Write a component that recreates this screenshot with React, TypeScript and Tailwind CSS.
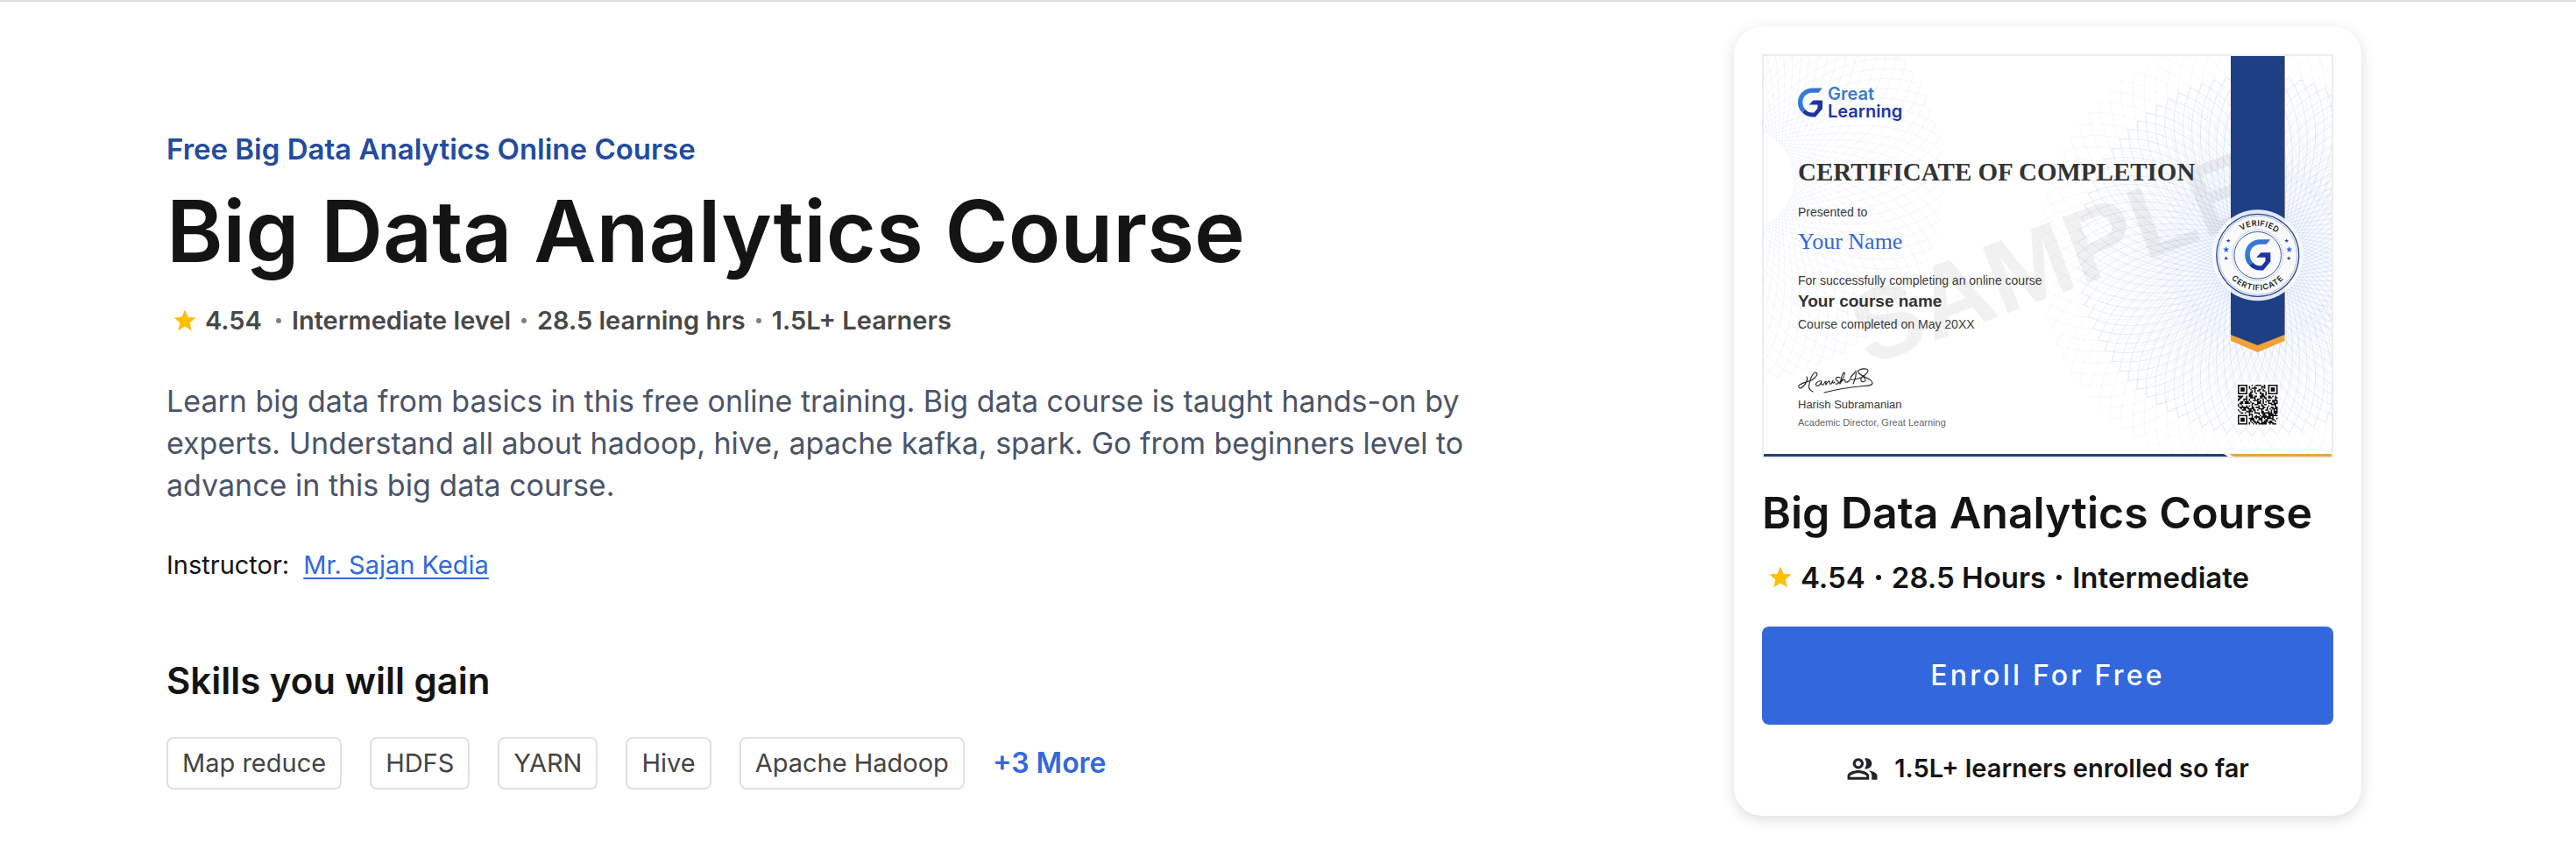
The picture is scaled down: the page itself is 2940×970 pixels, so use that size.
import { MdOutlinePeopleAlt, MdStar } from "react-icons/md";

const skills = ["Map reduce", "HDFS", "YARN", "Hive", "Apache Hadoop"];

function polar(cx: number, cy: number, r: number, degrees: number): string {
  const a = (degrees * Math.PI) / 180;
  return `${(cx + r * Math.cos(a)).toFixed(2)} ${(cy + r * Math.sin(a)).toFixed(2)}`;
}

function rosettePath(
  cx: number,
  cy: number,
  inner: number,
  outer: number,
  count: number,
  sweep: number,
): string {
  const step = 360 / count;
  let d = "";
  for (let i = 0; i < count; i++) {
    const a = i * step;
    for (const dir of [-1, 1]) {
      d += `M${polar(cx, cy, inner, a - dir * sweep * 2)}`;
      d += `C${polar(cx, cy, inner + (outer - inner) * 0.35, a - dir * sweep * 0.4)}`;
      d += ` ${polar(cx, cy, inner + (outer - inner) * 0.75, a)}`;
      d += ` ${polar(cx, cy, outer, a + dir * sweep)}`;
    }
  }
  return d;
}

function Rosette({
  cx,
  cy,
  inner,
  outer,
  count,
  sweep,
  opacity,
}: {
  cx: number;
  cy: number;
  inner: number;
  outer: number;
  count: number;
  sweep: number;
  opacity: number;
}) {
  return (
    <path
      d={rosettePath(cx, cy, inner, outer, count, sweep)}
      fill="none"
      stroke="#3f6fc8"
      strokeWidth="0.7"
      strokeOpacity={opacity}
    />
  );
}

function GlyphG({ id }: { id: string }) {
  return (
    <>
      <defs>
        <linearGradient id={id} x1="1" y1="0" x2="0.2" y2="1">
          <stop offset="0" stopColor="#3a6fd0" />
          <stop offset="0.7" stopColor="#3480dc" />
          <stop offset="1" stopColor="#2f6fd0" />
        </linearGradient>
      </defs>
      <path
        d="M28 0H17C7 0 0 7 0 16.500C0 21 1.800 24.800 4.600 27.600L8.600 24.400C6.600 22.400 5.400 19.700 5.400 16.500C5.400 10 10 5.200 17 5.200H23.500Z"
        fill={`url(#${id})`}
      />
      <path
        d="M4.600 27.600C7.800 31.200 12 33 16.500 33H20L28 23.500V14H17.500L12.500 19H22.400V23L18.200 28H16C13 28 10.500 26.600 8.600 24.400Z"
        fill="#1d35a3"
      />
    </>
  );
}

const starPoints =
  "0,-5 1.300,-1.600 4.800,-1.500 2,0.700 3,4.100 0,2.100 -3,4.100 -2,0.700 -4.800,-1.500 -1.300,-1.600";

const badgeStars = [
  { x: -33.5, y: -16.5, s: 0.5, fill: "#24499b" },
  { x: -36, y: -6.5, s: 0.76, fill: "#3369de" },
  { x: -36, y: 3.5, s: 0.5, fill: "#24499b" },
  { x: 33, y: -16.5, s: 0.5, fill: "#24499b" },
  { x: 36, y: -6.5, s: 0.76, fill: "#3369de" },
  { x: 35.5, y: 3.5, s: 0.5, fill: "#24499b" },
];

const QR_SIZE = 29;

function inFinder(x: number, y: number): boolean {
  const edge = QR_SIZE - 8;
  return (x < 8 && y < 8) || (x >= edge && y < 8) || (x < 8 && y >= edge);
}

function qrPath(): string {
  let d = "";
  let seed = 7919;
  for (let y = 0; y < QR_SIZE; y++) {
    for (let x = 0; x < QR_SIZE; x++) {
      seed = (seed * 1103515245 + 12345) % 2147483648;
      if (!inFinder(x, y) && seed / 2147483648 < 0.52) {
        d += `M${x} ${y}h1v1h-1z`;
      }
    }
  }
  return d;
}

function QrCode() {
  const finders = [
    [0, 0],
    [QR_SIZE - 7, 0],
    [0, QR_SIZE - 7],
  ];
  return (
    <g transform="translate(541 375) scale(1.57)">
      <rect x="-1.500" y="-1.500" width="32" height="32" fill="#fff" />
      <path d={qrPath()} fill="#111" />
      {finders.map(([x, y]) => (
        <g key={`${x}-${y}`} fill="#111">
          <path
            fillRule="evenodd"
            d={`M${x} ${y}h7v7h-7zM${x + 1} ${y + 1}v5h5v-5z`}
          />
          <rect x={x + 2} y={y + 2} width="3" height="3" />
        </g>
      ))}
    </g>
  );
}

function CertificateArt() {
  return (
    <svg
      viewBox="0 0 648 457"
      preserveAspectRatio="none"
      className="absolute inset-0 h-full w-full"
      aria-hidden="true"
    >
      <defs>
        <radialGradient id="tint">
          <stop offset="0" stopColor="#eef3fc" />
          <stop offset="0.5" stopColor="#f9fbfe" />
          <stop offset="1" stopColor="#ffffff" />
        </radialGradient>
        <path id="arc-top" d="M-33.500 0A33.500 33.500 0 0 1 33.500 0" />
        <path id="arc-bottom" d="M-40 0A40 40 0 0 0 40 0" />
      </defs>
      <circle cx="564" cy="227" r="205" fill="url(#tint)" />
      <Rosette cx={-24} cy={140} inner={58} outer={230} count={90} sweep={16} opacity={0.09} />
      <Rosette cx={564} cy={227} inner={90} outer={252} count={90} sweep={12} opacity={0.07} />
      <Rosette cx={564} cy={227} inner={40} outer={206} count={90} sweep={16} opacity={0.18} />
      <text
        transform="translate(119 354) rotate(-20.800)"
        className="font-['Liberation_Sans',sans-serif] text-[117px] font-bold"
        fill="#000"
        fillOpacity="0.055"
      >
        SAMPLE
      </text>

      <path d="M533 0H594.500V325L563.700 338L533 325Z" fill="#f0a138" />
      <path d="M533 0H594.500V318L563.700 330L533 318Z" fill="#1f3f85" />

      <g transform="translate(563.700 227.300)">
        <circle r="52" fill="#fbfbfd" fillOpacity="0.9" />
        <circle r="47" fill="#fafafa" stroke="#24499b" strokeWidth="1.300" />
        <circle r="45" fill="none" stroke="#8ba2d3" strokeWidth="0.700" />
        <circle r="29" fill="none" stroke="#7f97cb" strokeWidth="0.900" strokeDasharray="1 1" />
        <circle r="26.800" fill="none" stroke="#24499b" strokeWidth="0.900" />
        <text
          className="font-['Inter',sans-serif] text-[9px] font-semibold tracking-wider"
          fill="#222"
          textAnchor="middle"
        >
          <textPath href="#arc-top" startOffset="52%">
            VERIFIED
          </textPath>
        </text>
        <text
          className="font-['Inter',sans-serif] text-[9px] font-semibold tracking-widest"
          fill="#222"
          textAnchor="middle"
        >
          <textPath href="#arc-bottom" startOffset="50%">
            CERTIFICATE
          </textPath>
        </text>
        {badgeStars.map((star, i) => (
          <polygon
            key={i}
            points={starPoints}
            fill={star.fill}
            transform={`translate(${star.x} ${star.y}) scale(${star.s})`}
          />
        ))}
        <g transform="translate(-14.500 -18) scale(1.040 1.070)">
          <GlyphG id="badge-g" />
        </g>
      </g>

      <QrCode />
      <path d="M0 454H525L530 457H0Z" fill="#1f3f85" />
      <path d="M531 454H648V457H536Z" fill="#f0a138" />
    </svg>
  );
}

function Signature() {
  return (
    <svg
      width="88"
      height="32"
      viewBox="0 0 88 32"
      fill="none"
      stroke="#222"
      strokeWidth="1.100"
      strokeLinecap="round"
      strokeLinejoin="round"
      role="img"
      aria-label="Signature"
      className="mt-10"
    >
      <path d="M10 10C12 13 9 18 6 21C3 24 0 23 1 20C3 17 12 16 17 13C21 10 24 6 20 5C16 6 13 15 12.500 21C12.500 25 15 26 17 27" />
      <path d="M27 15C23 14 19 18 21 20C24 21 26 18 27 15C26 18 27 20 29 19C30 17 31 15 32 15C32 17 31 19 32 19C33 17 35 14 36 15C36 17 36 19 38 18L40 14M40 14C39 17 40 18 42 16" />
      <path d="M48 11C45 9 42 12 44 14C47 15 47 19 43 18M47 17C51 13 54 8 53 5C50 6 49 13 48 18C50 14 53 12 54 14C53 17 56 17 59 14" />
      <path d="M65 5C62 8 59 12 60 13C64 14 69 12 72 11M66 3C67 8 65 14 63 18M68 4C71 0 80 0 80 3C80 7 73 9 72 12C71 16 75 17 77 14C78 11 71 8 69 5C71 10 84 11 85 17C85 21 76 20 70 21C58 22 42 25 30 28" />
    </svg>
  );
}

function Certificate() {
  return (
    <div className="relative h-[461px] overflow-hidden border-2 border-[#ececec] bg-white">
      <CertificateArt />
      <div className="relative flex flex-col items-start pt-[34px] pl-[39px] font-['Liberation_Sans',sans-serif] text-sm text-[#3a3a3a]">
        <div className="flex h-[38px] items-center gap-1.5 font-['Inter',sans-serif] text-[20px] leading-5 font-semibold">
          <svg width="28" height="34" viewBox="0 0 28 33" aria-hidden="true">
            <GlyphG id="logo-g" />
          </svg>
          <div>
            <div className="text-[#3a78d3]">Great</div>
            <div className="text-[#1d35a3]">Learning</div>
          </div>
        </div>
        <div className="mt-10 font-['Liberation_Serif',serif] text-[29px] leading-10 font-bold text-[#333]">
          CERTIFICATE OF COMPLETION
        </div>
        <div className="mt-4">Presented to</div>
        <div className="mt-2 font-['Liberation_Serif',serif] text-[26px] leading-8 text-[#3369d6]">
          Your Name
        </div>
        <div className="mt-[18px]">For successfully completing an online course</div>
        <div className="mt-0.5 text-[19px] leading-6 font-bold text-[#333]">Your course name</div>
        <div className="mt-1">Course completed on May 20XX</div>
        <Signature />
        <div className="text-[13px] leading-5">Harish Subramanian</div>
        <div className="mt-0.5 text-[11px] leading-4 text-[#666]">
          Academic Director, Great Learning
        </div>
      </div>
    </div>
  );
}

function Dot({ className }: { className: string }) {
  return <span className={`size-1.5 shrink-0 rounded-full ${className}`} />;
}

function CourseCard() {
  return (
    <aside className="w-[716px] shrink-0 rounded-[32px] bg-white p-8 shadow-[0_4px_16px_rgba(0,0,0,0.14)]">
      <Certificate />
      <h2 className="mt-[30px] text-[50px] leading-[64px] font-semibold whitespace-nowrap">
        Big Data Analytics Course
      </h2>
      <div className="mt-[18px] flex items-center gap-3 pl-1.5 text-[33px] leading-[48px] font-semibold whitespace-nowrap">
        <span className="flex items-center gap-2">
          <MdStar size={30} color="#ffbf00" />
          4.54
        </span>
        <Dot className="bg-[#141414]" />
        <span>28.5 Hours</span>
        <Dot className="bg-[#141414]" />
        <span>Intermediate</span>
      </div>
      <button
        type="button"
        className="mt-8 h-28 w-full rounded-lg bg-[#3368dd] text-[32px] font-medium tracking-widest text-white"
      >
        Enroll For Free
      </button>
      <div className="mt-7 flex items-center justify-center gap-[18px] text-[29px] leading-[44px] font-semibold">
        <MdOutlinePeopleAlt size={37} color="#242428" />
        <span>1.5L+ learners enrolled so far</span>
      </div>
    </aside>
  );
}

export default function App() {
  return (
    <main className="flex min-h-screen items-start justify-between gap-16 border-t-2 border-[#dedede] bg-white pt-7 pr-[245px] pb-10 pl-[190px] font-['Inter',sans-serif] text-[#141414]">
      <section className="max-w-[1500px] pt-[116px]">
        <p className="text-[33px] leading-[48px] font-semibold text-[#234b9f]">
          Free Big Data Analytics Online Course
        </p>
        <h1 className="text-[98px] leading-[140px] font-semibold">Big Data Analytics Course</h1>
        <div className="mt-2 flex items-center gap-3 pl-1.5 text-[29px] leading-[48px] font-semibold text-[#484848]">
          <span className="mr-1 flex items-center gap-2">
            <MdStar size={30} color="#ffbf00" />
            4.54
          </span>
          <Dot className="bg-[#808080]" />
          <span>Intermediate level</span>
          <Dot className="bg-[#808080]" />
          <span>28.5 learning hrs</span>
          <Dot className="bg-[#808080]" />
          <span>1.5L+ Learners</span>
        </div>
        <p className="mt-11 text-[34px] leading-[48px] text-[#4a5468]">
          Learn big data from basics in this free online training. Big data course is taught hands-on by
          experts. Understand all about hadoop, hive, apache kafka, spark. Go from beginners level to
          advance in this big data course.
        </p>
        <div className="mt-[45px] flex gap-4 text-[29px] leading-[44px]">
          <span>Instructor:</span>
          <a href="#instructor" className="text-[#3368dd] underline underline-offset-4">
            Mr. Sajan Kedia
          </a>
        </div>
        <h2 className="mt-[78px] text-[42px] leading-[64px] font-semibold">Skills you will gain</h2>
        <div className="mt-8 flex items-center gap-8">
          <ul className="flex gap-8">
            {skills.map((skill) => (
              <li
                key={skill}
                className="rounded-lg border-2 border-[#e0e0e0] px-4 text-[29px] leading-[56px] text-[#444]"
              >
                {skill}
              </li>
            ))}
          </ul>
          <button type="button" className="text-[32px] font-semibold text-[#3368dd]">
            +3 More
          </button>
        </div>
      </section>
      <CourseCard />
    </main>
  );
}
